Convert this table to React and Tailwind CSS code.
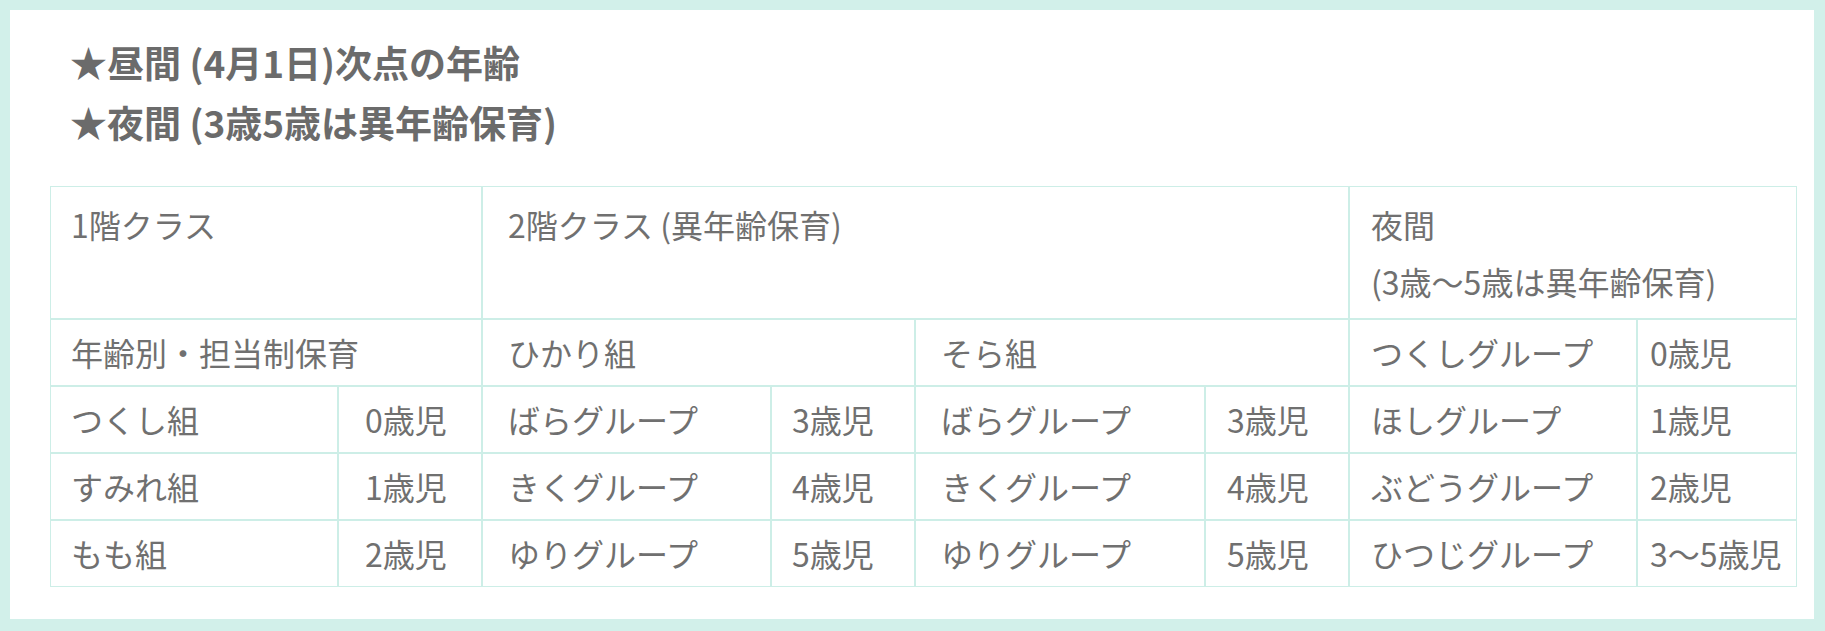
import React from "react";

const cellBase = "border border-[#cdeee7] align-top text-left font-normal";

const rows = [
    ["つくし組", "0歳児", "ばらグループ", "3歳児", "ばらグループ", "3歳児", "ほしグループ", "1歳児"],
    ["すみれ組", "1歳児", "きくグループ", "4歳児", "きくグループ", "4歳児", "ぶどうグループ", "2歳児"],
    ["もも組", "2歳児", "ゆりグループ", "5歳児", "ゆりグループ", "5歳児", "ひつじグループ", "3〜5歳児"],
];

// left padding per column, measured from the screenshot
const padLeft = [
    "pl-[20px]",
    "pl-[26px]",
    "pl-[25px]",
    "pl-[20px]",
    "pl-[25px]",
    "pl-[21px]",
    "pl-[21px]",
    "pl-[12px]",
];

const App = () => {
    return (
        <div className="w-full h-[631px] bg-[#d2f0ea] pt-[10px] pl-[10px] pr-[11px] pb-[12px] font-['Noto_Sans_CJK_JP','Noto_Sans',sans-serif] text-[#707070]">
            <div className="bg-white h-full w-full pt-[22px]">
                <div className="pl-[60px] text-[37px] leading-[60px] font-bold text-[#6b6b6b]">
                    <p>★昼間 (4月1日)次点の年齢</p>
                    <p>★夜間 (3歳5歳は異年齢保育)</p>
                </div>

                <table className="ml-[40px] mt-[34px] w-[1747px] table-fixed border-separate border-spacing-0 text-[32px] leading-[57px]">
                    <colgroup>
                        <col className="w-[288px]" />
                        <col className="w-[144px]" />
                        <col className="w-[289px]" />
                        <col className="w-[144px]" />
                        <col className="w-[290px]" />
                        <col className="w-[144px]" />
                        <col className="w-[288px]" />
                        <col className="w-[160px]" />
                    </colgroup>
                    <tbody>
                        <tr>
                            <td colSpan="2" className={`${cellBase} pl-[20px] pt-[9px] pb-[8px]`}>
                                1階クラス
                            </td>
                            <td colSpan="4" className={`${cellBase} pl-[25px] pt-[9px] pb-[8px]`}>
                                2階クラス (異年齢保育)
                            </td>
                            <td colSpan="2" className={`${cellBase} pl-[21px] pt-[9px] pb-[8px]`}>
                                夜間
                                <br />
                                (3歳〜5歳は異年齢保育)
                            </td>
                        </tr>
                        <tr>
                            <td colSpan="2" className={`${cellBase} pl-[20px] py-[4px]`}>
                                年齢別・担当制保育
                            </td>
                            <td colSpan="2" className={`${cellBase} pl-[25px] py-[4px]`}>
                                ひかり組
                            </td>
                            <td colSpan="2" className={`${cellBase} pl-[25px] py-[4px]`}>
                                そら組
                            </td>
                            <td className={`${cellBase} pl-[21px] py-[4px] whitespace-nowrap`}>
                                つくしグループ
                            </td>
                            <td className={`${cellBase} pl-[12px] py-[4px] whitespace-nowrap`}>
                                0歳児
                            </td>
                        </tr>
                        {rows.map((row, i) => (
                            <tr key={i}>
                                {row.map((cell, j) => (
                                    <td
                                        key={j}
                                        className={`${cellBase} ${padLeft[j]} py-[4px] whitespace-nowrap`}
                                    >
                                        {cell}
                                    </td>
                                ))}
                            </tr>
                        ))}
                    </tbody>
                </table>
            </div>
        </div>
    );
};

export default App;
